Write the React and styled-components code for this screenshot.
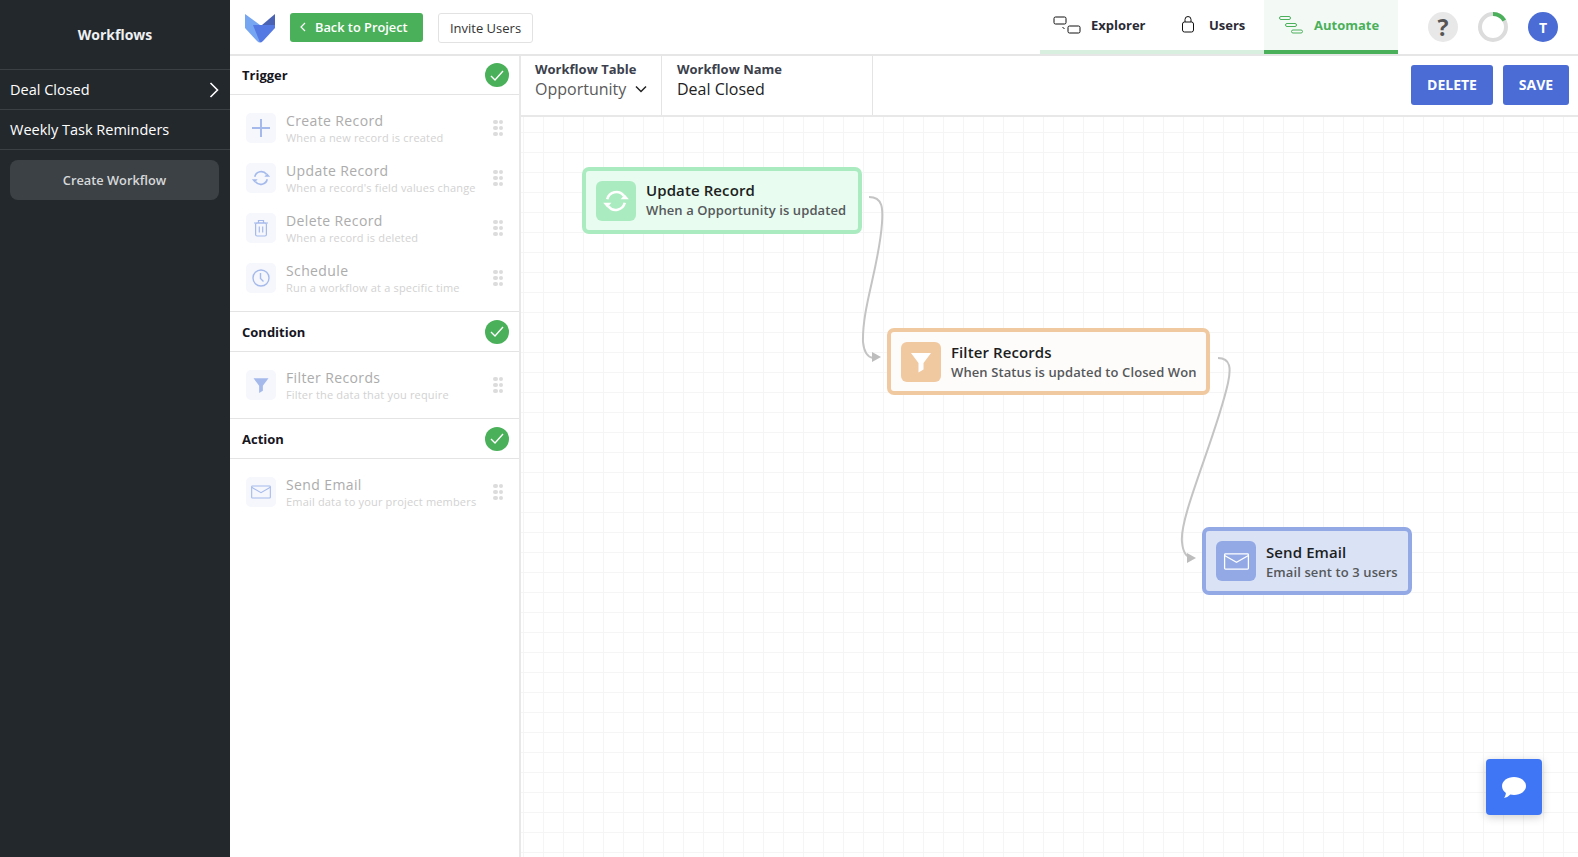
import React from "react";
import styled, { createGlobalStyle } from "styled-components";

const GlobalStyle = createGlobalStyle`
  html, body {
    margin: 0;
    padding: 0;
    height: 100%;
    overflow: hidden;
    background: #fff;
    font-family: "Open Sans", "Noto Sans", sans-serif;
  }
  * { box-sizing: border-box; }
`;

const Page = styled.div`
  display: flex;
  width: 1578px;
  height: 857px;
`;

const Sidebar = styled.aside`
  width: 230px;
  flex: none;
  background: #23282d;
  color: #fff;
`;

const SidebarTitle = styled.div`
  height: 69px;
  display: flex;
  align-items: center;
  justify-content: center;
  font-size: 14px;
  font-weight: 700;
  color: #eef0f2;
`;

const SidebarRow = styled.div`
  height: 40px;
  display: flex;
  align-items: center;
  justify-content: space-between;
  padding: 0 11px 0 10px;
  border-top: 1px solid #3b4045;
  font-size: 14.5px;
  color: #fff;
`;

const CreateButton = styled.div`
  margin: 10px 11px 0 10px;
  height: 40px;
  border-radius: 8px;
  background: #3c4145;
  color: #d6d8da;
  font-size: 12.8px;
  font-weight: 600;
  display: flex;
  align-items: center;
  justify-content: center;
`;

const SidebarList = styled.div`
  border-bottom: 1px solid #3b4045;
`;

const Main = styled.div`
  flex: 1;
  display: flex;
  flex-direction: column;
  min-width: 0;
`;

const TopBar = styled.header`
  height: 56px;
  flex: none;
  display: flex;
  align-items: flex-start;
  border-bottom: 2px solid #e6e6e6;
  padding-left: 14px;
`;

const Logo = styled.svg`
  width: 32px;
  height: 30px;
  margin-top: 13px;
`;

const BackButton = styled.div`
  margin: 13px 0 0 14px;
  width: 133px;
  height: 29px;
  border-radius: 3px;
  background: #4ab05a;
  color: #fff;
  font-size: 12.8px;
  font-weight: 600;
  display: flex;
  align-items: center;
  padding: 0 0 1px 10px;
  gap: 9px;
`;

const InviteButton = styled.div`
  margin: 13px 0 0 15px;
  width: 95px;
  height: 30px;
  border: 1px solid #e2e2e2;
  border-radius: 3px;
  background: #fff;
  color: #333;
  font-size: 13px;
  display: flex;
  align-items: center;
  justify-content: center;
`;

const Tabs = styled.nav`
  margin-left: auto;
  display: flex;
  height: 54px;
`;

const Tab = styled.div`
  display: flex;
  align-items: center;
  height: 54px;
  padding-bottom: 1px;
  width: ${(p) => p.$width}px;
  padding-left: ${(p) => p.$pad}px;
  gap: ${(p) => p.$gap}px;
  font-size: 13px;
  font-weight: 700;
  color: ${(p) => (p.$active ? "#4ab05a" : "#2a2a35")};
  background: ${(p) => (p.$active ? "#f3f9f5" : "#fff")};
  border-bottom: 4px solid ${(p) => (p.$active ? "#4ab05a" : "#d8efe0")};
`;

const TopActions = styled.div`
  display: flex;
  gap: 20px;
  padding: 12px 20px 0 30px;
`;

const HelpCircle = styled.div`
  width: 30px;
  height: 30px;
  border-radius: 50%;
  background: #e8e8e8;
  color: #555;
  font-size: 23px;
  font-weight: 700;
  display: flex;
  align-items: center;
  justify-content: center;
`;

const Avatar = styled(HelpCircle)`
  background: #4a6cd4;
  color: #fff;
  font-size: 14px;
`;

const Body = styled.div`
  flex: 1;
  display: flex;
  min-height: 0;
`;

const Panel = styled.div`
  width: 291px;
  flex: none;
  border-right: 2px solid #e8e8e8;
`;

const SectionHead = styled.div`
  height: ${(p) => (p.$first ? "39px" : "41px")};
  display: flex;
  align-items: center;
  justify-content: space-between;
  padding: 0 10px 0 12px;
  border-bottom: 1px solid #e4e4e4;
  border-top: ${(p) => (p.$first ? "0" : "1px solid #e4e4e4")};
  font-size: 13px;
  font-weight: 700;
  color: #16161f;
`;

const CheckBadge = styled.span`
  width: 24px;
  height: 24px;
  border-radius: 50%;
  background: #4ab05a;
  display: flex;
  align-items: center;
  justify-content: center;
`;

const ItemList = styled.div`
  padding: 18px 16px 18px 16px;
  display: flex;
  flex-direction: column;
  gap: 20px;
`;

const Item = styled.div`
  display: flex;
  align-items: center;
  height: 30px;
`;

const ItemIcon = styled.span`
  width: 30px;
  height: 30px;
  flex: none;
  border-radius: 5px;
  background: #f5f7fd;
  display: flex;
  align-items: center;
  justify-content: center;
`;

const ItemText = styled.div`
  margin-left: 10px;
  padding-top: 2px;
  flex: 1;
  min-width: 0;
`;

const ItemTitle = styled.div`
  font-size: 14px;
  line-height: 16px;
  letter-spacing: 0.38px;
  color: #acacac;
  white-space: nowrap;
`;

const ItemSub = styled.div`
  font-size: 11px;
  line-height: 17px;
  letter-spacing: 0.18px;
  color: #d2d2d2;
  white-space: nowrap;
`;

const Grip = styled.span`
  display: grid;
  grid-template-columns: repeat(2, 4.5px);
  grid-auto-rows: 4.5px;
  column-gap: 1px;
  row-gap: 1.5px;
  flex: none;
  & > i {
    border-radius: 50%;
    background: #dcdcdc;
  }
`;

const Work = styled.div`
  flex: 1;
  display: flex;
  flex-direction: column;
  min-width: 0;
`;

const SubBar = styled.div`
  height: 61px;
  flex: none;
  display: flex;
  border-bottom: 2px solid #e8e8e8;
`;

const SubField = styled.div`
  width: ${(p) => p.$width}px;
  padding: 5px 0 0 ${(p) => p.$pad}px;
  border-right: 1px solid #e4e4e4;
`;

const SubLabel = styled.div`
  font-size: 13px;
  line-height: 16px;
  font-weight: 700;
  color: #3c3f4c;
`;

const SubValue = styled.div`
  margin-top: 2px;
  font-size: 16px;
  line-height: 20px;
  color: ${(p) => p.$color};
  display: flex;
  align-items: center;
  gap: 9px;
`;

const SubActions = styled.div`
  margin-left: auto;
  display: flex;
  gap: 10px;
  padding: 9px 9px 0 0;
`;

const ActionButton = styled.div`
  width: ${(p) => p.$width}px;
  height: 40px;
  padding-bottom: 1px;
  border-radius: 3px;
  background: #4a6cd4;
  color: #fff;
  font-size: 14px;
  font-weight: 700;
  display: flex;
  align-items: center;
  justify-content: center;
`;

const Canvas = styled.div`
  position: relative;
  flex: 1;
  background-color: #fff;
  background-image: linear-gradient(#f5f5f5 1px, transparent 1px),
    linear-gradient(90deg, #f5f5f5 1px, transparent 1px);
  background-size: 20px 20px;
  background-position: 2px 15px;
  overflow: hidden;
`;

const Edges = styled.svg`
  position: absolute;
  left: 0;
  top: 0;
  width: 100%;
  height: 100%;
`;

const tones = {
  green: { border: "#abebc0", bg: "#e8fcf0", icon: "#abebc0" },
  orange: { border: "#f0c9a0", bg: "#fefcfb", icon: "#f0c9a0" },
  blue: { border: "#92a9e6", bg: "#dae2f6", icon: "#92a9e6" },
};

const Node = styled.div`
  position: absolute;
  left: ${(p) => p.$x}px;
  top: ${(p) => p.$y}px;
  width: ${(p) => p.$w}px;
  height: ${(p) => p.$h || 67}px;
  display: flex;
  align-items: center;
  padding: 0 10px;
  border: 4px solid ${(p) => tones[p.$tone].border};
  border-radius: 7px;
  background: ${(p) => tones[p.$tone].bg};
`;

const NodeIcon = styled.span`
  width: 40px;
  height: 40px;
  flex: none;
  border-radius: 6px;
  background: ${(p) => tones[p.$tone].icon};
  display: flex;
  align-items: center;
  justify-content: center;
`;

const NodeText = styled.div`
  margin-left: 10px;
  padding-top: ${(p) => p.$drop || 0}px;
`;

const NodeTitle = styled.div`
  font-size: 15px;
  line-height: 19px;
  letter-spacing: 0.1px;
  font-weight: 600;
  color: #1c1f1e;
  white-space: nowrap;
`;

const NodeSub = styled.div`
  font-size: 13px;
  line-height: 20px;
  letter-spacing: 0.1px;
  font-weight: 600;
  color: #55585a;
  white-space: nowrap;
`;

const ChatButton = styled.div`
  position: absolute;
  left: 965px;
  top: 642px;
  width: 56px;
  height: 56px;
  padding-top: 2px;
  border-radius: 4px;
  background: #3f76f6;
  box-shadow: 0 2px 10px rgba(0, 0, 0, 0.2);
  display: flex;
  align-items: center;
  justify-content: center;
`;

const SyncIcon = ({ size, color, sw = 2 }) => (
  <svg width={size} height={size} viewBox="0 0 24 24" fill="none" stroke={color} strokeWidth={sw}>
    <path d="M4.500 10.500A8 8 0 0 1 18.600 7.500" />
    <path d="M19.500 13.500A8 8 0 0 1 5.400 16.500" />
    <path d="M16 10.500h7l-3.500-4z" fill={color} stroke="none" />
    <path d="M1 13.500h7l-3.500 4z" fill={color} stroke="none" />
  </svg>
);

const MailIcon = ({ w, h, color, sw = 1.2 }) => (
  <svg width={w} height={h} viewBox="0 0 30 20" fill="none" stroke={color} strokeWidth={sw}>
    <rect x="1" y="1" width="28" height="18" rx="1" />
    <path d="M1 3l14 8 14-8" />
  </svg>
);

const FunnelIcon = ({ size, color }) => (
  <svg width={size} height={size} viewBox="0 0 24 24" fill={color}>
    <path d="M2 3h20l-7.500 10v6.500l-5 3V13z" />
  </svg>
);

const PlusIcon = ({ color }) => (
  <svg width="20" height="20" viewBox="0 0 20 20" stroke={color} strokeWidth="2">
    <path d="M1 10h18M10 1v18" />
  </svg>
);

const TrashIcon = ({ color }) => (
  <svg width="16" height="18" viewBox="0 0 16 18" fill="none" stroke={color} strokeWidth="1.2">
    <path d="M1 4h14M5.500 4V1.500h5V4" />
    <rect x="2.600" y="4" width="10.800" height="13" rx="1.500" />
    <path d="M6.300 7.500v6M9.700 7.500v6" />
  </svg>
);

const ClockIcon = ({ color }) => (
  <svg width="18" height="18" viewBox="0 0 18 18" fill="none" stroke={color} strokeWidth="1.4">
    <circle cx="9" cy="9" r="8" />
    <path d="M8.500 4v5.500l3 3" />
  </svg>
);

const Check = () => (
  <svg width="14" height="11" viewBox="0 0 14 11" fill="none" stroke="#fff" strokeWidth="1.4">
    <path d="M1 6l4 4 8-9" />
  </svg>
);

const GripDots = () => (
  <Grip>
    {[...Array(6)].map((_, i) => (
      <i key={i} />
    ))}
  </Grip>
);

const soft = "#a5baeb";

const triggers = [
  { title: "Create Record", sub: "When a new record is created", icon: <PlusIcon color={soft} /> },
  { title: "Update Record", sub: "When a record's field values change", icon: <SyncIcon size={20} color={soft} /> },
  { title: "Delete Record", sub: "When a record is deleted", icon: <TrashIcon color={soft} /> },
  { title: "Schedule", sub: "Run a workflow at a specific time", icon: <ClockIcon color={soft} /> },
];

const PanelItems = ({ items }) => (
  <ItemList>
    {items.map((item) => (
      <Item key={item.title}>
        <ItemIcon>{item.icon}</ItemIcon>
        <ItemText>
          <ItemTitle>{item.title}</ItemTitle>
          <ItemSub>{item.sub}</ItemSub>
        </ItemText>
        <GripDots />
      </Item>
    ))}
  </ItemList>
);

const App = () => {
  return (
    <Page>
      <GlobalStyle />
      <Sidebar>
        <SidebarTitle>Workflows</SidebarTitle>
        <SidebarList>
          <SidebarRow>
            Deal Closed
            <svg width="10" height="16" viewBox="0 0 10 16" fill="none" stroke="#fff" strokeWidth="1.6">
              <path d="M1.500 1l7 7-7 7" />
            </svg>
          </SidebarRow>
          <SidebarRow>Weekly Task Reminders</SidebarRow>
        </SidebarList>
        <CreateButton>Create Workflow</CreateButton>
      </Sidebar>
      <Main>
        <TopBar>
          <Logo viewBox="0 0 32 30">
            <path d="M1 1l15 11v17.500C15 29.500 14 29 13 28L1 15z" fill="#76a5f2" />
            <path d="M9 12h22v3L19 28c-1 1-2 1.500-3 1.500z" fill="#5579e3" />
            <path d="M31 1v11H18z" fill="#4a62b4" />
          </Logo>
          <BackButton>
            <svg width="6" height="10" viewBox="0 0 6 10" fill="none" stroke="#fff" strokeWidth="1.2">
              <path d="M5 1L1 5l4 4" />
            </svg>
            Back to Project
          </BackButton>
          <InviteButton>Invite Users</InviteButton>
          <Tabs>
            <Tab $width={111} $pad={13} $gap={10}>
              <svg width="28" height="18" viewBox="0 0 28 18" fill="none" stroke="#111" strokeWidth="1">
                <rect x="1" y="1" width="12" height="7" rx="1.500" />
                <rect x="15" y="10" width="12" height="7" rx="1.500" />
                <path d="M9.500 11l2 2" />
              </svg>
              Explorer
            </Tab>
            <Tab $width={113} $pad={30} $gap={14}>
              <svg width="14" height="17" viewBox="0 0 14 17" fill="none" stroke="#111" strokeWidth="1">
                <rect x="1.500" y="6" width="11" height="10" rx="2" />
                <path d="M4 6V3.500a3 3 0 0 1 6 0V6" />
              </svg>
              Users
            </Tab>
            <Tab $active $width={134} $pad={15} $gap={11}>
              <svg width="24" height="18" viewBox="0 0 24 18" fill="none" stroke="#4ab05a" strokeWidth="1">
                <rect x="0.500" y="0.500" width="11" height="3" rx="1.500" />
                <rect x="6.500" y="7.500" width="11" height="3" rx="1.500" />
                <rect x="12.500" y="14" width="11" height="3" rx="1.500" />
              </svg>
              Automate
            </Tab>
          </Tabs>
          <TopActions>
            <HelpCircle>?</HelpCircle>
            <svg width="30" height="30" viewBox="0 0 30 30" fill="none" strokeWidth="4">
              <circle cx="15" cy="15" r="13" stroke="#dcdcdc" />
              <path d="M15 2A13 13 0 0 1 26.300 8.500" stroke="#4ab05a" />
            </svg>
            <Avatar>T</Avatar>
          </TopActions>
        </TopBar>
        <Body>
          <Panel>
            <SectionHead $first>
              Trigger
              <CheckBadge><Check /></CheckBadge>
            </SectionHead>
            <PanelItems items={triggers} />
            <SectionHead>
              Condition
              <CheckBadge><Check /></CheckBadge>
            </SectionHead>
            <PanelItems
              items={[
                { title: "Filter Records", sub: "Filter the data that you require", icon: <FunnelIcon size={18} color={soft} /> },
              ]}
            />
            <SectionHead>
              Action
              <CheckBadge><Check /></CheckBadge>
            </SectionHead>
            <PanelItems
              items={[
                { title: "Send Email", sub: "Email data to your project members", icon: <MailIcon w={20} h={14} color={soft} sw={1.6} /> },
              ]}
            />
          </Panel>
          <Work>
            <SubBar>
              <SubField $width={141} $pad={14}>
                <SubLabel>Workflow Table</SubLabel>
                <SubValue $color="#5a5a5a">
                  Opportunity
                  <svg width="12" height="8" viewBox="0 0 12 8" fill="none" stroke="#222" strokeWidth="1.500">
                    <path d="M1 1.500l5 5 5-5" />
                  </svg>
                </SubValue>
              </SubField>
              <SubField $width={211} $pad={15}>
                <SubLabel>Workflow Name</SubLabel>
                <SubValue $color="#222">Deal Closed</SubValue>
              </SubField>
              <SubActions>
                <ActionButton $width={82}>DELETE</ActionButton>
                <ActionButton $width={66}>SAVE</ActionButton>
              </SubActions>
            </SubBar>
            <Canvas>
              <Edges>
                <g fill="none" stroke="#c4c4c4" strokeWidth="2">
                  <path d="M348 80C362 80 362 92 361 106C358 150 341 190 342 225C343 235 346 240 352 241" />
                  <path d="M697 241C710 241 710 252 707 266C695 320 658 400 661 425C662 436 666 441 672 441" />
                </g>
                <path d="M351 235l9 5-9 5z" fill="#bdbdbd" />
                <path d="M666 436l9 5-9 5z" fill="#bdbdbd" />
              </Edges>
              <Node $tone="green" $x={61} $y={50} $w={280}>
                <NodeIcon $tone="green"><SyncIcon size={28} color="#fff" sw={2.2} /></NodeIcon>
                <NodeText>
                  <NodeTitle>Update Record</NodeTitle>
                  <NodeSub>When a Opportunity is updated</NodeSub>
                </NodeText>
              </Node>
              <Node $tone="orange" $x={366} $y={211} $w={323}>
                <NodeIcon $tone="orange"><FunnelIcon size={24} color="#fff" /></NodeIcon>
                <NodeText $drop={2}>
                  <NodeTitle>Filter Records</NodeTitle>
                  <NodeSub>When Status is updated to Closed Won</NodeSub>
                </NodeText>
              </Node>
              <Node $tone="blue" $x={681} $y={410} $w={210} $h={68}>
                <NodeIcon $tone="blue"><MailIcon w={27} h={17} color="#fff" sw={1.5} /></NodeIcon>
                <NodeText $drop={2}>
                  <NodeTitle>Send Email</NodeTitle>
                  <NodeSub>Email sent to 3 users</NodeSub>
                </NodeText>
              </Node>
              <ChatButton>
                <svg width="26" height="24" viewBox="0 0 26 24" fill="#fff">
                  <path d="M13 1c6.600 0 12 3.900 12 9s-5.400 9-12 9c-1.300 0-2.500-.15-3.700-.45C7.500 20.500 5 21.800 3 22c1-1.200 1.700-3 1.900-5C2.500 15.300 1 12.800 1 10c0-5.100 5.400-9 12-9z" />
                </svg>
              </ChatButton>
            </Canvas>
          </Work>
        </Body>
      </Main>
    </Page>
  );
};

export default App;
